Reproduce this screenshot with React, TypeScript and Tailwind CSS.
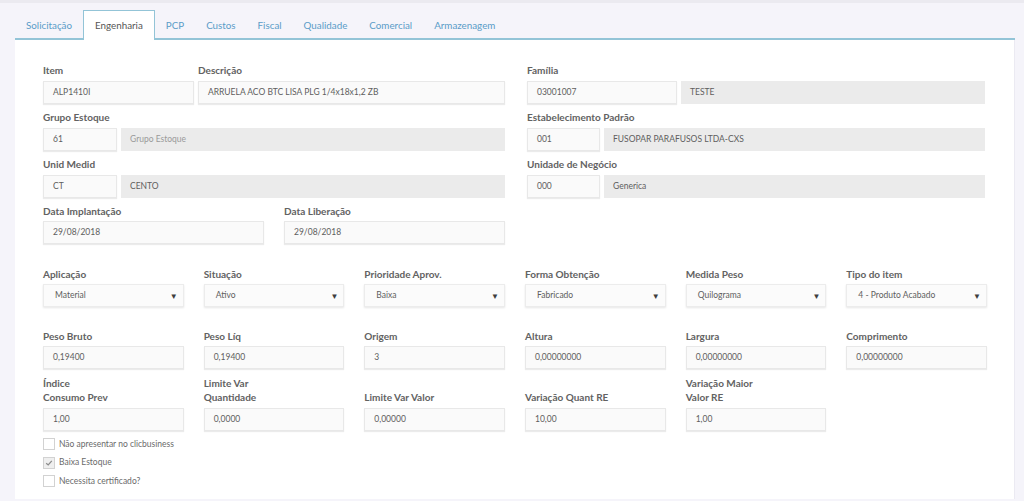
import clsx from 'clsx';

const TABS = ['Solicitação', 'Engenharia', 'PCP', 'Custos', 'Fiscal', 'Qualidade', 'Comercial', 'Armazenagem'];

const Label = ({ children }: { children: React.ReactNode }) => (
  <div className="text-[10px] font-bold leading-[14px] text-[#626262]">{children}</div>
);

const Box = ({ value, disabled, className }: { value: string; disabled?: boolean; className?: string }) => (
  <div
    className={clsx(
      'h-[23px] flex items-center px-[9px] text-[8.5px] text-[#5e5e5e] whitespace-nowrap overflow-hidden',
      disabled
        ? 'bg-[#ebebeb]'
        : 'bg-[#fafafa] border border-[#e8e8e8] shadow-[0_1px_1px_rgba(0,0,0,0.08)]',
      className,
    )}
  >
    {value}
  </div>
);

const Select = ({ value }: { value: string }) => (
  <div className="h-[23px] flex items-center justify-between pl-[11px] pr-[5px] text-[8.5px] text-[#5e5e5e] bg-[#fbfbfb] border border-[#ececec] shadow-[0_1px_2px_rgba(0,0,0,0.1)]">
    <span>{value}</span>
    <span className="text-[8px] text-[#3e3e3e]">▼</span>
  </div>
);

const Check = ({ label, checked }: { label: string; checked?: boolean }) => (
  <div className="flex items-center gap-[4px] h-[18.5px]">
    <div
      className={clsx(
        'w-[12px] h-[12px] border border-[#d2d2d2] flex items-center justify-center',
        checked ? 'bg-[#efefef]' : 'bg-white',
      )}
    >
      {checked && (
        <svg width="8" height="8" viewBox="0 0 8 8">
          <path d="M1.2 4.2 L3.2 6 L6.8 1.8" fill="none" stroke="#8a8a8a" strokeWidth="1.2" />
        </svg>
      )}
    </div>
    <span className="text-[8.5px] text-[#6a6a6a]">{label}</span>
  </div>
);

const App = () => {
  return (
    <div className="w-[1024px] h-[501px] bg-[#f5f4fa] overflow-hidden" style={{ fontFamily: 'Lato, "Liberation Sans", sans-serif' }}>
      <div className="h-[3px] bg-[#ebeaf0]" />
      <div className="ml-[15px] w-[1000px]">
        {/* tabs */}
        <div className="flex items-end pt-[7px] border-b-2 border-[#93c4d7] h-[37px]">
          {TABS.map((t) => (
            <div
              key={t}
              className={clsx(
                'px-[11px] h-[29px] flex items-center text-[9.8px] -mb-[2px]',
                t === 'Engenharia'
                  ? 'bg-white border border-b-0 border-[#93c4d7] text-[#555] h-[30px]'
                  : 'text-[#5a9cc8]',
              )}
            >
              {t}
            </div>
          ))}
        </div>
        {/* panel */}
        <div className="bg-white h-[459px] pl-[28px] pt-[23px] border-r border-[#ebeaf2]">
          <div className="w-[944px]">
            <div className="grid grid-cols-2 gap-x-[20px]">
              <div className="flex flex-col gap-y-[6px]">
                <div className="flex gap-[4px]">
                  <div className="w-[151px]">
                    <Label>Item</Label>
                    <div className="mt-[4px]"><Box value="ALP1410I" /></div>
                  </div>
                  <div className="flex-1">
                    <Label>Descrição</Label>
                    <div className="mt-[4px]"><Box value="ARRUELA ACO BTC LISA PLG 1/4x18x1,2 ZB" /></div>
                  </div>
                </div>
                <div>
                  <Label>Grupo Estoque</Label>
                  <div className="mt-[4px] flex gap-[4px]">
                    <Box value="61" className="w-[74px]" />
                    <Box value="Grupo Estoque" disabled className="flex-1 text-[#9a9a9a]" />
                  </div>
                </div>
                <div>
                  <Label>Unid Medid</Label>
                  <div className="mt-[4px] flex gap-[4px]">
                    <Box value="CT" className="w-[74px]" />
                    <Box value="CENTO" disabled className="flex-1" />
                  </div>
                </div>
                <div className="grid grid-cols-2 gap-x-[20px]">
                  <div>
                    <Label>Data Implantação</Label>
                    <div className="mt-[3px]"><Box value="29/08/2018" /></div>
                  </div>
                  <div>
                    <Label>Data Liberação</Label>
                    <div className="mt-[3px]"><Box value="29/08/2018" /></div>
                  </div>
                </div>
              </div>
              <div className="flex flex-col gap-y-[6px] pl-[2px]">
                <div>
                  <Label>Família</Label>
                  <div className="mt-[4px] flex gap-[4px] w-[458px]">
                    <Box value="03001007" className="w-[150px]" />
                    <Box value="TESTE" disabled className="flex-1" />
                  </div>
                </div>
                <div>
                  <Label>Estabelecimento Padrão</Label>
                  <div className="mt-[4px] flex gap-[4px] w-[458px]">
                    <Box value="001" className="w-[73px]" />
                    <Box value="FUSOPAR PARAFUSOS LTDA-CXS" disabled className="flex-1" />
                  </div>
                </div>
                <div>
                  <Label>Unidade de Negócio</Label>
                  <div className="mt-[4px] flex gap-[4px] w-[458px]">
                    <Box value="000" className="w-[73px]" />
                    <Box value="Generica" disabled className="flex-1" />
                  </div>
                </div>
              </div>
            </div>

            {/* selects */}
            <div className="grid grid-cols-6 gap-x-[20px] mt-[23px]">
              {[
                ['Aplicação', 'Material'],
                ['Situação', 'Ativo'],
                ['Prioridade Aprov.', 'Baixa'],
                ['Forma Obtenção', 'Fabricado'],
                ['Medida Peso', 'Quilograma'],
                ['Tipo do item', '4 - Produto Acabado'],
              ].map(([l, v]) => (
                <div key={l}>
                  <Label>{l}</Label>
                  <div className="mt-[3px]"><Select value={v} /></div>
                </div>
              ))}
            </div>

            <div className="grid grid-cols-6 gap-x-[20px] mt-[22px]">
              {[
                ['Peso Bruto', '0,19400'],
                ['Peso Líq', '0,19400'],
                ['Origem', '3'],
                ['Altura', '0,00000000'],
                ['Largura', '0,00000000'],
                ['Comprimento', '0,00000000'],
              ].map(([l, v]) => (
                <div key={l}>
                  <Label>{l}</Label>
                  <div className="mt-[3px]"><Box value={v} /></div>
                </div>
              ))}
            </div>

            <div className="grid grid-cols-6 gap-x-[20px] mt-[7px] items-end">
              {[
                [['Índice', 'Consumo Prev'], '1,00'],
                [['Limite Var', 'Quantidade'], '0,0000'],
                [['Limite Var Valor'], '0,00000'],
                [['Variação Quant RE'], '10,00'],
                [['Variação Maior', 'Valor RE'], '1,00'],
              ].map(([l, v]) => (
                <div key={(l as string[]).join(' ')}>
                  {(l as string[]).map((x) => (
                    <Label key={x}>{x}</Label>
                  ))}
                  <div className="mt-[4px]"><Box value={v as string} /></div>
                </div>
              ))}
            </div>

            <div className="mt-[4px]">
              <Check label="Não apresentar no clicbusiness" />
              <Check label="Baixa Estoque" checked />
              <Check label="Necessita certificado?" />
            </div>
          </div>
        </div>
      </div>
    </div>
  );
};

export default App;
